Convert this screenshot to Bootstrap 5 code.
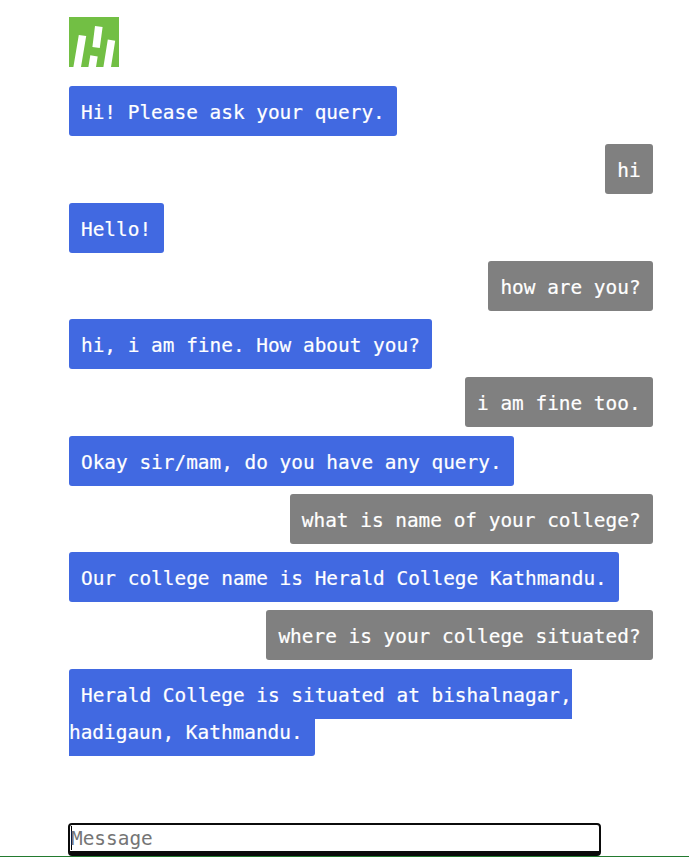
<!DOCTYPE html>
<html lang="en">
<head>
<meta charset="utf-8">
<meta name="viewport" content="width=device-width, initial-scale=1">
<title>College chat</title>
<link href="https://cdn.jsdelivr.net/npm/bootstrap@5.3.0/dist/css/bootstrap.min.css" rel="stylesheet">
<style>
  body { font-family: Consolas, "DejaVu Sans Mono", monospace; font-size: 19.42px; background: #fff; }
  .chat-page { height: 862px; padding: 17px 36px 0 69px; }
  .chat-logo { width: 50px; height: 50px; margin-bottom: 27px; flex: none; }
  .msg { line-height: 37px; margin-bottom: 21.25px; color: #fff; }
  .msg span { padding: 15px 12.4px 12px 12px; border-radius: 3px; -webkit-text-stroke: .2px #fff; }
  .bot span { background: #4169e1; }
  .user span { background: #808080; }
  .composer { margin: 0 -36px 5px -69px; padding-left: 68px; border-bottom: 1px solid #237a2f; }
  .msg-field { width: 533px; height: 33px; border: 2px solid #0b0b0b; border-bottom-width: 5px; border-radius: 4px; padding: 1px 0 0 1px; line-height: 26px; color: #757575; background: #fff; }
  .caret { width: 1px; height: 24px; background: #000; margin-right: -1px; }
</style>
</head>
<body>
<main class="chat-page d-flex flex-column overflow-hidden">
  <svg class="chat-logo d-block" viewBox="0 0 50 50" role="img" aria-label="Herald College">
    <path fill="#72bf44" d="M0 0h50v50H0z"/>
    <path fill="#fff" d="M9.8 18 17.2 19.1 12 50H4.4zM26 9 33.6 10.1 30.8 31 23.4 30zM21.3 38.3 28.7 39.4 27 50H19.4zM38.8 22.6 46.2 23.7 42 50H34.4z"/>
  </svg>
  <p class="msg bot"><span>Hi! Please ask your query.</span></p>
  <p class="msg user text-end"><span>hi</span></p>
  <p class="msg bot"><span>Hello!</span></p>
  <p class="msg user text-end"><span>how are you?</span></p>
  <p class="msg bot"><span>hi, i am fine. How about you?</span></p>
  <p class="msg user text-end"><span>i am fine too.</span></p>
  <p class="msg bot"><span>Okay sir/mam, do you have any query.</span></p>
  <p class="msg user text-end"><span>what is name of your college?</span></p>
  <p class="msg bot"><span>Our college name is Herald College Kathmandu.</span></p>
  <p class="msg user text-end"><span>where is your college situated?</span></p>
  <p class="msg bot"><span>Herald College is situated at bishalnagar, hadigaun, Kathmandu.</span></p>
  <div class="composer mt-auto">
    <div class="msg-field d-flex" role="textbox" aria-label="Message"><i class="caret"></i>Message</div>
  </div>
</main>
<script src="https://cdn.jsdelivr.net/npm/bootstrap@5.3.0/dist/js/bootstrap.bundle.min.js"></script>
</body>
</html>
